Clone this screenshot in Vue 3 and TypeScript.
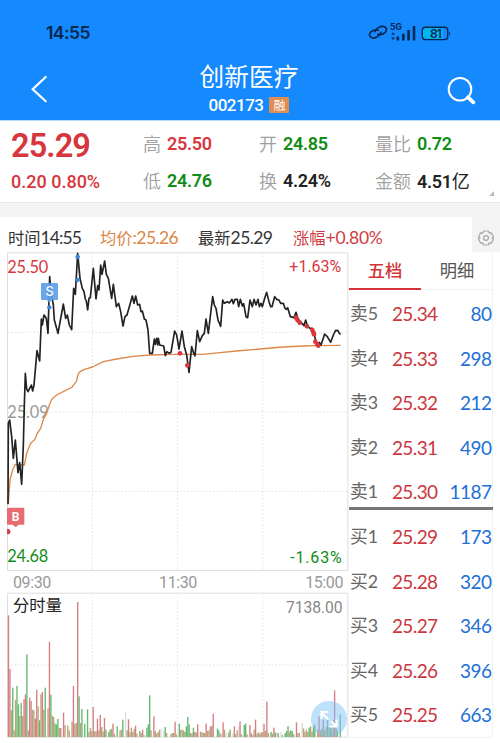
<script setup lang="ts">
interface Stat { label: string; value: string; unit?: string; tone: string }
interface Level { side: string; price: string; volume: string }
interface Bar { x: number; h: number; tone: string }

const stats: Stat[] = [
  { label: '高', value: '25.50', tone: 'up' },
  { label: '开', value: '24.85', tone: 'down' },
  { label: '量比', value: '0.72', tone: 'down' },
  { label: '低', value: '24.76', tone: 'down' },
  { label: '换', value: '4.24%', tone: 'flat' },
  { label: '金额', value: '4.51', unit: '亿', tone: 'flat' },
]

const sells: Level[] = [
  { side: '卖5', price: '25.34', volume: '80' },
  { side: '卖4', price: '25.33', volume: '298' },
  { side: '卖3', price: '25.32', volume: '212' },
  { side: '卖2', price: '25.31', volume: '490' },
  { side: '卖1', price: '25.30', volume: '1187' },
]
const buys: Level[] = [
  { side: '买1', price: '25.29', volume: '173' },
  { side: '买2', price: '25.28', volume: '320' },
  { side: '买3', price: '25.27', volume: '346' },
  { side: '买4', price: '25.26', volume: '396' },
  { side: '买5', price: '25.25', volume: '663' },
]

const priceLine =
  '24,778 25,535 29,525 35,575 40,640 46,585 54,683 59,653 65,718 70,600 73,480 76,385 80,432 84,440 94,420 98,438 102,420 111,317 119,348 124,222 127,240 132,210 139,220 144,265 149,95 153,140 160,180 163,225 174,265 190,177 197,220 202,210 208,240 215,254 221,130 226,148 233,25 240,100 247,130 252,140 256,162 259,168 263,195 267,160 271,158 280,70 288,162 293,122 297,135 302,60 306,88 314,48 319,88 325,100 335,160 340,118 349,185 356,175 362,200 369,243 375,215 381,210 397,153 402,175 407,153 413,180 419,178 423,200 427,198 433,222 438,225 444,255 449,325 457,325 463,282 466,298 470,280 473,300 475,280 479,300 491,303 496,332 501,320 508,325 513,322 524,258 530,270 537,312 546,258 553,305 560,330 567,382 575,305 581,325 585,333 592,257 599,290 607,272 613,265 618,222 625,265 632,205 638,155 643,180 648,190 654,225 662,244 668,165 673,175 682,170 688,174 696,163 700,176 705,163 712,163 716,185 721,163 727,183 731,176 738,215 743,218 750,165 757,185 762,163 768,180 774,163 778,185 783,175 787,185 794,160 800,142 807,170 812,185 816,185 824,155 830,163 837,165 842,175 850,175 855,190 859,193 863,188 868,205 871,215 882,218 888,202 894,222 903,232 912,242 917,225 923,245 930,250 937,250 943,270 948,290 953,300 958,292 963,300 974,267 982,275 992,292 1000,270 1007,256 1014,257 1018,265 1022,268'

const averageLine =
  '25,775 30,705 38,675 46,658 60,660 73,660 80,625 92,595 105,583 112,565 122,550 130,523 140,505 148,480 156,462 170,450 190,440 205,432 215,428 222,418 229,410 234,388 240,380 252,374 277,366 310,350 350,342 400,334 450,330 525,328 607,328 660,323 710,318 780,312 850,306 910,303 950,302 1022,301'

const trades = [
  [540, 325], [562, 361], [888, 218], [893, 226], [899, 233], [921, 244],
  [937, 255], [940, 262], [942, 268], [946, 290], [951, 297], [955, 302],
]

// One token per minute: tone (r up, g down, m mixed, l faint) and bar height.
const volumeSeries = `r365 r204 m80 g148 m20 m112 g153 g98 m63 g102 m63 r113 r128 g248 m20 r118 r108 m82 m80 r55
r142 m92 g50 m128 r135 m82 g148 m0 m86 r286 g127 m64 m60 g40 g38 g54 m27 r27 m0 r73
m36 m0 m34 m20 m0 m46 r153 m40 m42 r405 g122 m42 g84 m0 g40 m0 g83 m15 m27 m18
r90 m17 m17 r55 m20 r66 m30 m17 r57 g22 m0 g15 g22 m25 r40 m10 m0 g32 m0 m20
m22 g52 m0 l75 m20 r53 m14 m28 m15 m24 r34 m10 m0 g18 m12 r22 m6 m0 g28 g38
g125 m20 m0 r62 m18 m10 m15 m22 l25 m0 l18 g30 m12 m0 m0 m8 m12 m12 r46 m8
m0 g40 m22 m22 m20 g15 g32 g60 g38 m12 m12 g28 r15 m14 r38 m0 m16 m15 m12 m12
r40 m18 m20 m32 r34 r70 m0 g0 g25 g20 m10 l12 r44 m22 l12 m0 m14 g22 m0 l12
r32 m8 m20 l30 r47 m8 m0 g36 g40 m8 m0 r36 m12 m6 m22 r52 m10 m14 m10 m14
m14 r40 m18 r106 m12 m0 g15 m10 r28 g14 l12 g12 m0 l16 m6 m0 g12 g18 g33 m16
g20 g18 m8 m0 r44 m12 m12 m0 l42 m26 m16 m22 m16 g28 m32 m16 g32 g37 m0 m24
r62 m20 g25 r52 m20 m30 g58 m28 g33 m25 m50 r140 m30 g20 m0 g67`

const colors: Record<string, string> = { r: '#d67f82', g: '#67b96e', m: '#b9a47e', l: '#dddddd' }
const bars: Bar[] = volumeSeries.split(/\s+/).map((token, i) => ({
  x: 23.5 + i * 4.235,
  h: Number(token.slice(1)),
  tone: colors[token[0]],
}))
</script>

<template>
  <div class="screen">
    <header class="top">
      <div class="status">
        <span class="clock">14:55</span>
        <svg class="status-icons" width="84" height="20" viewBox="0 0 84 20">
          <g fill="none" stroke="#072850" stroke-width="1.7" stroke-linecap="round">
            <path d="M7.200 9.600C8 6 12.500 3.600 16 4.600c3 .9 3.400 4 1 6-1.800 1.500-4.800 2.400-7.200 1.700" />
            <path d="M12.800 10.400C12 14 7.500 16.800 4 15.800c-3-.9-3.400-4-1-6 1.800-1.500 4.800-2.400 7.200-1.700" />
          </g>
          <text x="22" y="8" class="net">5G</text>
          <g fill="#072850">
            <path d="M25 10.200l2 2.600h-4zM25 18l2-2.600h-4z" />
            <rect x="28.500" y="14.500" width="2.600" height="4" rx=".5" />
            <rect x="34" y="11.700" width="2.600" height="6.800" rx=".5" />
            <rect x="39.300" y="8" width="2.600" height="10.500" rx=".5" />
            <rect x="44.700" y="4" width="2.600" height="14.500" rx=".5" />
          </g>
          <rect x="55" y="6.200" width="20" height="10.600" rx="1.800" fill="#00b7f1" />
          <rect x="54.300" y="5.200" width="25.400" height="12.400" rx="3" fill="none" stroke="#072850" stroke-width="1.400" />
          <path d="M81 9.500q2 1.800 0 4z" fill="#072850" />
          <text x="67.500" y="15.700" text-anchor="middle" class="charge">81</text>
        </svg>
      </div>
      <nav class="nav">
        <svg class="back" width="18" height="28" viewBox="0 0 18 28">
          <path d="M14.700 2L1.700 14.300l13 12" fill="none" stroke="#fff" stroke-width="2.200" stroke-linecap="round" />
        </svg>
        <div class="heading">
          <h1>创新医疗</h1>
          <div class="sub"><span class="code">002173</span><span class="tag">融</span></div>
        </div>
        <svg class="search" width="30" height="30" viewBox="0 0 30 30">
          <circle cx="13" cy="13.300" r="11.300" fill="none" stroke="#fff" stroke-width="2" />
          <path d="M21 21.300l5.400 5" stroke="#fff" stroke-width="3.800" stroke-linecap="round" />
        </svg>
      </nav>
    </header>

    <section class="quote">
      <div class="last">
        <div class="price">25.29</div>
        <div class="change">0.20 0.80%</div>
      </div>
      <div class="stats">
        <div v-for="s in stats" :key="s.label" class="stat">
          <span class="stat-label">{{ s.label }}</span>
          <span :class="['stat-value', s.tone]">{{ s.value }}<span v-if="s.unit" class="unit">{{ s.unit }}</span></span>
        </div>
      </div>
      <i class="corner"></i>
    </section>

    <section class="info">
      <span class="i-time">时间<b>14:55</b></span>
      <span class="i-avg">均价<b>:25.26</b></span>
      <span class="i-last">最新<b>25.29</b></span>
      <span class="i-range">涨幅<b>+0.80%</b></span>
      <div class="gear">
        <svg width="16" height="16" viewBox="0 0 16 16" fill="none" stroke="#a5a5a5" stroke-width="1.200" stroke-linejoin="round">
          <path d="M5.700 1h4.600l.9 2.100 2.300-.2L15.500 7l-1.400 1 1.400 1-2 4.100-2.300-.2-.9 2.100H5.700l-.9-2.100-2.300.2L.5 9l1.400-1L.5 7l2-4.100 2.300.2z" />
          <circle cx="8" cy="8" r="2.400" />
        </svg>
      </div>
    </section>

    <main class="board">
      <div class="charts">
        <svg class="price-chart" width="342" height="319" viewBox="21 21 1026 957">
          <g class="grid">
            <path d="M23 262H1043M23 501H1043M23 739H1043M277 23V976M533 23V976M788 23V976" />
          </g>
          <path class="frame" d="M22.500 23.500H1043.500V976.500H22.500Z" />
          <text x="22" y="83" textLength="123" class="lbl up">25.50</text>
          <text x="22" y="518" textLength="124" class="lbl mute">25.09</text>
          <text x="22" y="951" textLength="123" class="lbl down">24.68</text>
          <text x="868" y="81" textLength="156" class="lbl pct up">+1.63%</text>
          <text x="871" y="955" textLength="154" class="lbl pct down">-1.63%</text>
          <polyline class="average" :points="averageLine" />
          <polyline class="line" :points="priceLine" />
          <g fill="#d9363e">
            <circle v-for="(t, i) in trades" :key="i" :cx="t[0]" :cy="t[1]" r="7" />
            <path d="M23 853a7 7 0 0 1 0 14z" stroke="#d9363e" stroke-width="3" />
          </g>
          <g fill="#3f86d8">
            <circle cx="233" cy="36" r="7" /><circle cx="233" cy="105" r="6.500" /><circle cx="148" cy="187" r="6.500" />
          </g>
          <path d="M126 114h45q3 0 3 3v45q0 3-3 3h-15l-8 8-8-8h-14q-3 0-3-3v-45q0-3 3-3z" fill="#5d9ee8" fill-opacity=".92" />
          <text x="148.500" y="154" text-anchor="middle" class="mark">S</text>
          <path d="M24 788h46q3 0 3 3v45q0 3-3 3H56l-9 8-9-8H24q-3 0-3-3v-45q0-3 3-3z" fill="#e76b70" />
          <text x="47" y="828" text-anchor="middle" class="mark b">B</text>
        </svg>
        <div class="axis"><span>09:30</span><span>11:30</span><span>15:00</span></div>
        <div class="volume">
          <svg width="342" height="146" viewBox="21 22 1026 438">
            <g class="grid"><path d="M23 241H1043M277 24V458M533 24V458M788 24V458" /></g>
            <path class="frame" d="M22.500 25.500H1043.500V457.500H22.500Z" />
            <rect v-for="(b, i) in bars" :key="i" :x="b.x" :y="457 - b.h" width="4.100" :height="b.h" :fill="b.tone" />
            <text x="39" y="80" textLength="147" class="vol-title">分时量</text>
            <text x="858" y="84" textLength="170" class="vol-max">7138.00</text>
          </svg>
          <div class="expand">
            <svg width="36" height="36" viewBox="0 0 36 36" fill="none" stroke="#fff" stroke-width="2.200">
              <path d="M17.500 18.500l-7-7M10.500 18v-7h7M20 20l5 5M25.500 18.500v7h-7" />
            </svg>
          </div>
        </div>
      </div>

      <aside class="book">
        <div class="tabs"><span class="tab active">五档</span><span class="tab">明细</span></div>
        <div v-for="l in sells" :key="l.side" class="level">
          <span class="side">{{ l.side }}</span><span class="lp">{{ l.price }}</span><span class="lv">{{ l.volume }}</span>
        </div>
        <div class="divider"></div>
        <div v-for="l in buys" :key="l.side" class="level">
          <span class="side">{{ l.side }}</span><span class="lp">{{ l.price }}</span><span class="lv">{{ l.volume }}</span>
        </div>
      </aside>
    </main>
  </div>
</template>

<style>
body {
  background: #fff;
}
</style>

<style scoped>
.screen {
  width: 500px;
  height: 743px;
  overflow: hidden;
  background: #fff;
  font-family: Lato, "Noto Sans CJK SC", sans-serif;
  color: #333;
}
.up { color: #d7363e; fill: #d7363e; }
.down { color: #118c15; fill: #118c15; }
.flat { color: #222; }
.mute { fill: #999; }

.top {
  height: 120px;
  background: #1589fe;
  border-bottom: 1px solid #b4dcff;
}
.status {
  display: flex;
  justify-content: space-between;
  height: 56px;
  padding: 21px 48px 0 46px;
  box-sizing: border-box;
}
.clock {
  font: 600 17.6px/24px Inter, sans-serif;
  letter-spacing: -0.6px;
  color: #072850;
}
.status-icons { margin-top: 1px; }
.net { font: 700 8.5px Inter, sans-serif; fill: #072850; }
.charge { font: 600 12px Inter, sans-serif; letter-spacing: -0.8px; fill: #072850; }
.nav {
  display: flex;
  justify-content: space-between;
  align-items: flex-start;
  padding: 0 23px 0 31px;
}
.back { margin-top: 19px; }
.heading {
  flex: 1;
  text-align: center;
  padding-left: 2px;
}
.search { margin-top: 20px; }
h1 {
  margin: 0;
  font: 400 24.7px/38px "Noto Sans CJK SC", sans-serif;
  color: #fff;
}
.sub {
  display: flex;
  justify-content: center;
  align-items: center;
  gap: 6px;
  height: 20px;
  margin-top: 1px;
}
.code {
  font: 500 17px/20px Roboto, sans-serif;
  letter-spacing: -0.5px;
  color: #fff;
}
.tag {
  width: 20px;
  height: 16px;
  border-radius: 1px;
  background: #e08b51;
  color: #fff;
  font: 400 12px/15px "Noto Sans CJK SC", sans-serif;
}

.quote {
  position: relative;
  display: flex;
  height: 81px;
  border-bottom: 1px solid #e9e9e9;
}
.last {
  width: 143px;
  padding-left: 11px;
  box-sizing: border-box;
  font-family: Roboto, sans-serif;
  color: #d7363e;
}
.price {
  margin-top: 5px;
  font-size: 32.5px;
  font-weight: 600;
  line-height: 40px;
  letter-spacing: -0.9px;
}
.change {
  margin-top: 5px;
  font-size: 18px;
  font-weight: 500;
  line-height: 22px;
}
.stats {
  display: grid;
  grid-template-columns: 116px 116px 120px;
  grid-template-rows: 37px 37px;
  padding-top: 4px;
}
.stat {
  display: flex;
  align-items: center;
  gap: 6px;
  line-height: 37px;
}
.stat-label {
  font-family: "Noto Sans CJK SC", sans-serif;
  font-size: 18px;
  font-weight: 350;
  color: #a0a0a0;
}
.stat-value {
  font-family: Roboto, sans-serif;
  font-size: 18px;
  font-weight: 600;
  letter-spacing: -0.3px;
}
.unit {
  font-family: "Noto Sans CJK SC", sans-serif;
  font-weight: 400;
}
.corner {
  position: absolute;
  right: 6px;
  bottom: 6px;
  border-style: solid;
  border-width: 0 0 5px 5px;
  border-color: transparent transparent #bbb transparent;
}

.info {
  display: grid;
  grid-template-columns: 92px 98px 95px 179px 28px;
  align-items: center;
  height: 35px;
  padding-left: 8px;
  border-top: 14px solid #f3f3f3;
  font-size: 16.3px;
  white-space: nowrap;
}
.info span { padding-top: 4px; }
.info b { font-weight: 400; font-size: 17.5px; letter-spacing: -0.3px; }
.i-time b { letter-spacing: -0.9px; }
.i-avg { color: #dc8648; }
.i-avg b { letter-spacing: -0.6px; }
.i-last b { letter-spacing: -0.6px; }
.i-range { color: #cf3c42; }
.gear {
  display: flex;
  align-items: center;
  justify-content: center;
  height: 35px;
  padding-top: 7px;
  box-sizing: border-box;
  background: #f3f3f3;
}

.board { display: flex; }
.charts {
  width: 342px;
  margin-left: 7px;
}
svg { display: block; }
.frame { fill: none; stroke: #dedede; stroke-width: 3; }
.grid { fill: none; stroke: #dcdcdc; stroke-width: 2.5; stroke-dasharray: 5 6; }
.line { fill: none; stroke: #222; stroke-width: 5; stroke-linejoin: round; }
.average { fill: none; stroke: #de874a; stroke-width: 4; stroke-linejoin: round; }
.lbl { font: 400 49px Lato, sans-serif; }
.lbl.pct { font: 400 48px Roboto, sans-serif; }
.mark { font: 500 38px Inter, sans-serif; fill: #fff; }
.mark.b { font: 700 36px Roboto, sans-serif; }
.axis {
  display: flex;
  justify-content: space-between;
  height: 21px;
  padding: 0 6px;
  font: 400 16px/24px Roboto, sans-serif;
  letter-spacing: -0.4px;
  color: #999;
}
.volume { position: relative; }
.vol-title { font: 400 49px "Noto Sans CJK SC", sans-serif; fill: #222; }
.vol-max { font: 400 47px Roboto, sans-serif; fill: #888; }
.expand {
  position: absolute;
  left: 304px;
  top: 109px;
  width: 36px;
  height: 36px;
  border-radius: 50%;
  background: rgba(125, 193, 248, 0.5);
}

.book {
  width: 144px;
  box-sizing: border-box;
  height: 486px;
  border-right: 1px solid #f2f2f2;
  border-bottom: 1px solid #f2f2f2;
}
.tabs {
  display: grid;
  grid-template-columns: 72px 72px;
  height: 38px;
  box-sizing: border-box;
  border-bottom: 1px solid #f0f0f0;
  font: 400 17.3px/36px "Noto Sans CJK SC", sans-serif;
  text-align: center;
  color: #555;
}
.tab { height: 36px; }
.tab.active {
  color: #d3343c;
  font-weight: 500;
  border-bottom: 2px solid #d3343c;
}
.level {
  display: grid;
  grid-template-columns: 36px 51.5px 54px;
  height: 44.6px;
  line-height: 47.6px;
  padding-left: 1px;
  font-size: 19px;
}
.side { color: #666; font-size: 17.8px; }
.lp { color: #cc373e; text-align: right; letter-spacing: -0.6px; }
.lv { color: #2170d8; text-align: right; letter-spacing: -0.5px; }
.divider {
  width: 144px;
  height: 3px;
  margin: -6px 0 3px;
  background: #777;
}
</style>
